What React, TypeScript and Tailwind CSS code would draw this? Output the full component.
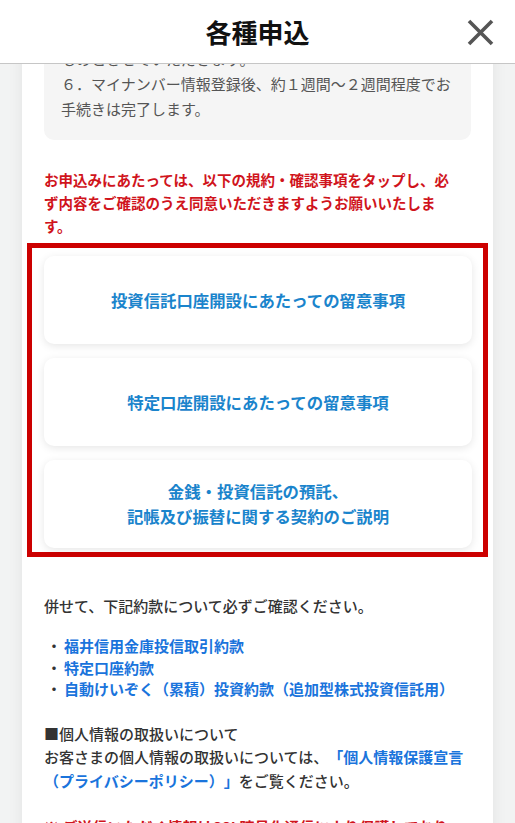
export default function App() {
  const font = { fontFamily: '"Noto Sans CJK JP", "Noto Sans", sans-serif' };

  const cards = [
    ["投資信託口座開設にあたっての留意事項"],
    ["特定口座開設にあたっての留意事項"],
    ["金銭・投資信託の預託、", "記帳及び振替に関する契約のご説明"],
  ];

  const terms = ["福井信用金庫投信取引約款", "特定口座約款", "自動けいぞく（累積）投資約款（追加型株式投資信託用）"];

  return (
    <div style={font} className="relative h-[823px] w-[515px] overflow-hidden bg-[#f2f3f3] [text-spacing-trim:space-all]">
      {/* header sits over the scrolled content */}
      <header className="absolute inset-x-0 top-0 z-10 flex h-[64px] items-center justify-center border-b border-[#c6c6c6] bg-white">
        <h1 className="text-[26px] font-bold leading-none text-[#111]">各種申込</h1>
        <button className="absolute right-[21px] top-[19px] h-[27px] w-[27px]">
          <svg viewBox="0 0 27 27" className="h-full w-full" stroke="#555" strokeWidth="3.6" strokeLinecap="butt">
            <path d="M2 2 L25 25 M25 2 L2 25" />
          </svg>
        </button>
      </header>

      <main className="mx-[22px] min-h-full bg-white pt-[5px] shadow-[0_0_14px_rgba(0,0,0,0.07)]">
        <div className="mx-[22px] rounded-[10px] bg-[#f5f5f5] px-[17px] pb-[19px] pt-[16px] text-[15px] leading-[25px] text-[#555]">
          <p>５．書類に不備がある場合は、お手続きできない</p>
          <p>ものとさせていただきます。</p>
          <p>６．マイナンバー情報登録後、約１週間〜２週間程度でお手続きは完了します。</p>
        </div>

        <p className="mx-[22px] mt-[28px] whitespace-nowrap text-[14.5px] font-bold leading-[23px] text-[#d0141c]">
          お申込みにあたっては、以下の規約・確認事項をタップし、必
          <br />
          ず内容をご確認のうえ同意いただきますようお願いいたしま
          <br />
          す。
        </p>

        <div className="mx-[5px] mt-[6px] flex flex-col gap-[14px] border-[5px] border-[#cc0000] pb-[4px] pl-[12px] pr-[11px] pt-[8px]">
          {cards.map((lines, i) => (
            <button
              key={i}
              className="flex h-[88px] flex-col items-center justify-center rounded-[10px] bg-white text-[16.4px] font-bold leading-[25px] text-[#1a84cc] shadow-[0_2px_8px_rgba(0,0,0,0.1)]"
            >
              {lines.map((l) => (
                <span key={l}>{l}</span>
              ))}
            </button>
          ))}
        </div>

        <div className="mx-[22px] mt-[37px] text-[15px] font-medium text-[#333]">
          <p className="leading-[23px]">併せて、下記約款について必ずご確認ください。</p>

          <ul className="mt-[18px] leading-[21.5px]">
            {terms.map((t) => (
              <li key={t} className="flex">
                <span className="w-[20px] shrink-0 text-center">・</span>
                <a className="font-bold text-[#1a74dc]">{t}</a>
              </li>
            ))}
          </ul>

          <div className="mt-[22px] leading-[23.5px]">
            <p>■個人情報の取扱いについて</p>
            <p>
              お客さまの個人情報の取扱いについては、
              <a className="font-bold text-[#1a74dc]">「個人情報保護宣言（プライバシーポリシー）」</a>
              をご覧ください。
            </p>
          </div>

          <p className="mt-[23px] pb-[40px] font-bold leading-[23px] text-[#d0141c]">
            ※ ご送信いただく情報はSSL暗号化通信により保護しており、第三者に読み取られることはありません。
          </p>
        </div>
      </main>
    </div>
  );
}
